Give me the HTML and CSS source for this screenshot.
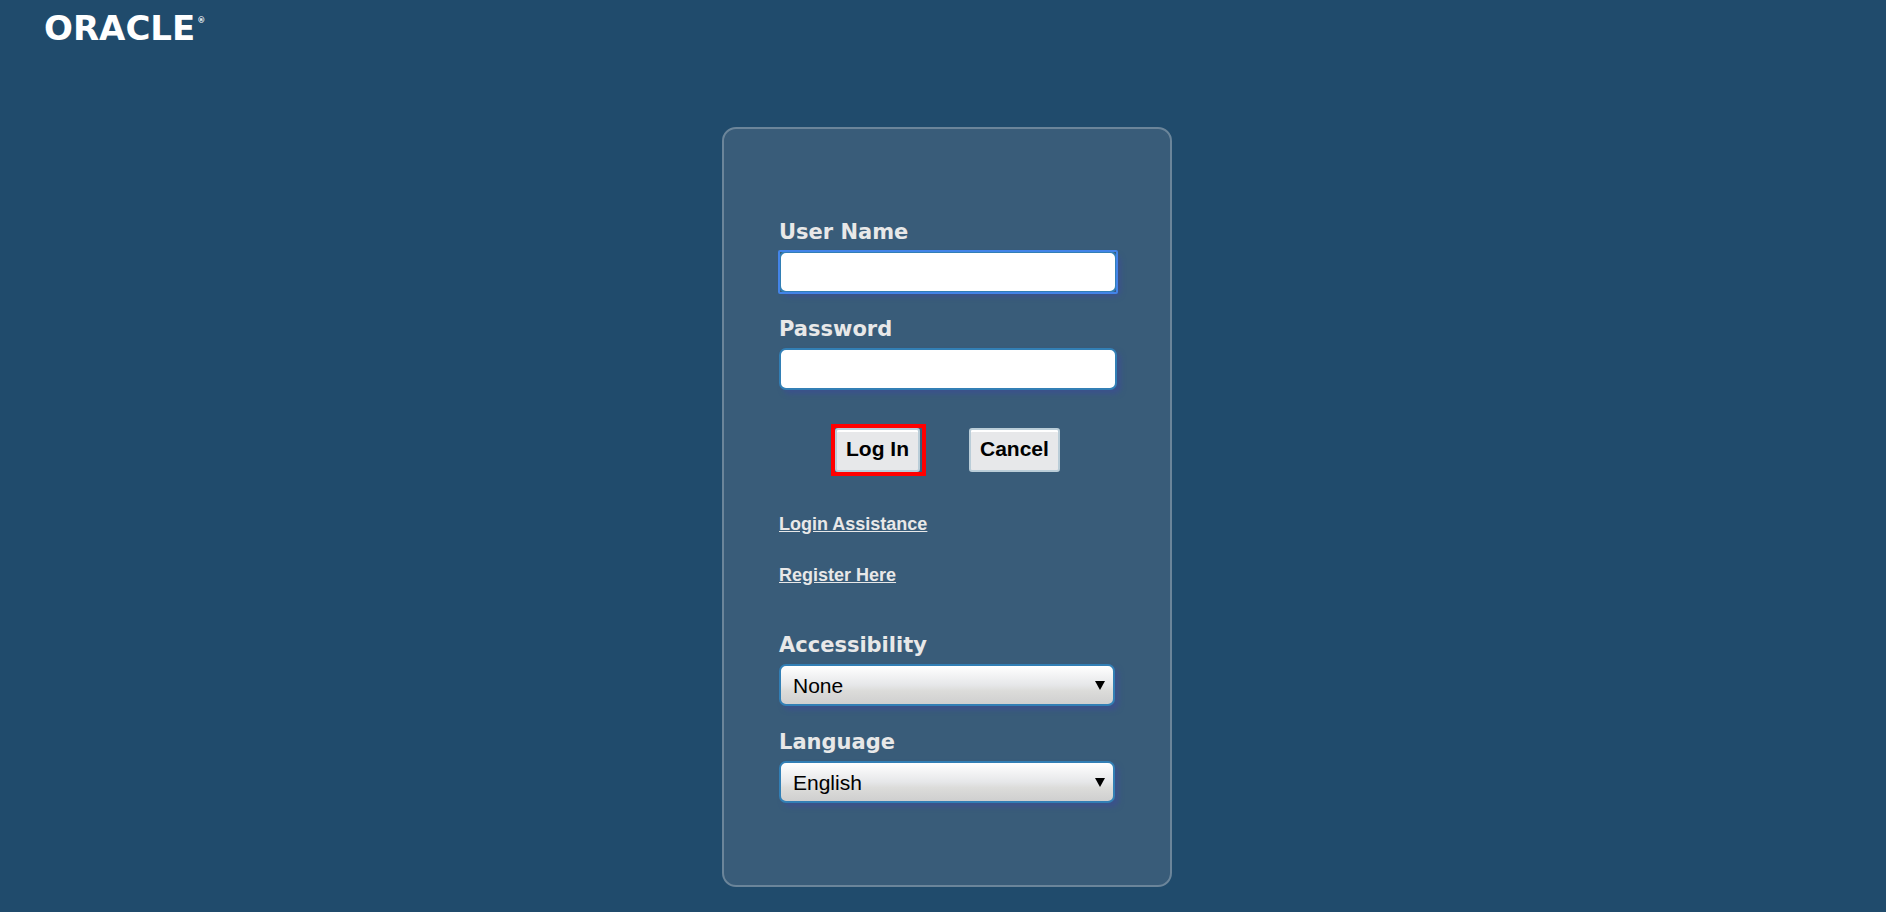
FILE: index.html
```html
<!DOCTYPE html>
<html lang="en">
<head>
<meta charset="utf-8">
<meta name="viewport" content="width=device-width, initial-scale=1">
<title>Login</title>
<link rel="stylesheet" href="styles.css">
</head>
<body>
<header class="masthead">
  <div class="brand">ORACLE<sup class="brand-mark">®</sup></div>
</header>
<main class="page">
  <form class="card">
    <div class="fields">
      <div class="field">
        <label for="username">User Name</label>
        <div class="focus-ring">
          <input class="control" id="username" type="text">
        </div>
      </div>
      <div class="field">
        <label for="password">Password</label>
        <input class="control" id="password" type="password">
      </div>
    </div>
    <div class="actions">
      <div class="highlight"><button class="button" type="button">Log In</button></div>
      <button class="button" type="button">Cancel</button>
    </div>
    <nav class="links">
      <a href="#">Login Assistance</a>
      <a href="#">Register Here</a>
    </nav>
    <div class="fields fields-select">
      <div class="field">
        <label for="accessibility">Accessibility</label>
        <div class="select">
          <select class="control" id="accessibility"><option>None</option></select>
        </div>
      </div>
      <div class="field">
        <label for="language">Language</label>
        <div class="select">
          <select class="control" id="language"><option>English</option></select>
        </div>
      </div>
    </div>
  </form>
</main>
</body>
</html>
```

FILE: styles.css
```css
* {
  box-sizing: border-box;
}

body {
  margin: 0;
  min-height: 100vh;
  background: #204b6c;
  color: #e8e8e8;
  font-family: "Liberation Sans", Arial, sans-serif;
}

.masthead {
  padding: 9px 44px 0;
}

.brand {
  display: flex;
  align-items: flex-start;
  gap: 2px;
  height: 38px;
  color: #fff;
  font: 700 34px/38px "DejaVu Sans", Verdana, sans-serif;
}

.brand-mark {
  font-size: 8px;
  line-height: 24px;
}

.page {
  padding: 80px 0 16px 8px;
}

.card {
  width: 100%;
  max-width: 450px;
  margin: 0 auto;
  padding: 91px 53px 82px 55px;
  border: 2px solid #6b859a;
  border-radius: 14px;
  background: #395c79;
}

.fields {
  display: flex;
  flex-direction: column;
  gap: 24px;
}

.field {
  display: flex;
  flex-direction: column;
  gap: 7px;
}

.field label {
  font: 700 21px/24px "DejaVu Sans", Verdana, sans-serif;
}

.control {
  display: block;
  width: 100%;
  height: 42px;
  padding: 0 12px;
  border: 2px solid #327fb5;
  border-radius: 7px;
  background: #fff;
  box-shadow: 4px 4px 5px #3b528b;
  color: #000;
  font: 21px "Liberation Sans", Arial, sans-serif;
}

.focus-ring {
  border-radius: 1px;
  outline: 2px solid #4384e8;
  outline-offset: -1px;
}

.actions {
  display: flex;
  align-items: center;
  gap: 43px;
  margin: 34px 0 36px 52px;
}

.highlight {
  padding-right: 2px;
  border: 4px solid #f00;
}

.button {
  display: block;
  height: 44px;
  padding: 0 9px 3px;
  border: 2px solid #bacdd8;
  border-radius: 3px;
  background: #e7e8ea;
  box-shadow: inset 0 2px #fff;
  color: #000;
  font: 700 21px/24px "Liberation Sans", Arial, sans-serif;
}

.links {
  display: flex;
  flex-direction: column;
  align-items: flex-start;
  gap: 27px;
  margin-bottom: 46px;
}

.links a {
  color: inherit;
  font-size: 18px;
  font-weight: 700;
  line-height: 24px;
}

.fields-select {
  padding-right: 2px;
}

.select {
  position: relative;
}

.select .control {
  appearance: none;
  background: linear-gradient(#fff, #e6e7e9 50%, #dcdcda 65%, #cfcfcf);
}

.select::after {
  content: "";
  position: absolute;
  top: 17px;
  right: 10px;
  border: solid transparent;
  border-width: 9px 5px 0;
  border-top-color: #000;
  pointer-events: none;
}
```
